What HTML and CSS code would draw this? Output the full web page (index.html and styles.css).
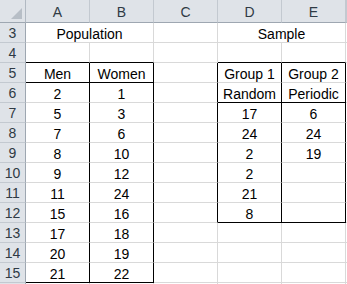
FILE: index.html
```html
<!DOCTYPE html>
<html>
<head>
<meta charset="utf-8">
<link rel="stylesheet" href="styles.css">
</head>
<body>
<div class="sheet">
  <div class="corner"><span class="tri"></span></div>
  <div class="ch">A</div><div class="ch">B</div><div class="ch">C</div><div class="ch">D</div><div class="ch">E</div><div class="ch last"></div>

  <div class="rh">3</div>
  <div class="c span2">Population</div><div class="c"></div><div class="c span2">Sample</div><div class="c f"></div>

  <div class="rh">4</div>
  <div class="c bb"></div><div class="c bb"></div><div class="c"></div><div class="c bb"></div><div class="c bb"></div><div class="c f"></div>

  <div class="rh">5</div>
  <div class="c bb br">Men</div><div class="c bb br">Women</div><div class="c br"></div><div class="c br">Group 1</div><div class="c br">Group 2</div><div class="c f"></div>

  <div class="rh">6</div>
  <div class="c br">2</div><div class="c br">1</div><div class="c br"></div><div class="c br bb">Random</div><div class="c br bb">Periodic</div><div class="c f"></div>

  <div class="rh">7</div>
  <div class="c br">5</div><div class="c br">3</div><div class="c br"></div><div class="c br">17</div><div class="c br">6</div><div class="c f"></div>

  <div class="rh">8</div>
  <div class="c br">7</div><div class="c br">6</div><div class="c br"></div><div class="c br">24</div><div class="c br">24</div><div class="c f"></div>

  <div class="rh">9</div>
  <div class="c br">8</div><div class="c br">10</div><div class="c br"></div><div class="c br">2</div><div class="c br">19</div><div class="c f"></div>

  <div class="rh">10</div>
  <div class="c br">9</div><div class="c br">12</div><div class="c br"></div><div class="c br">2</div><div class="c br"></div><div class="c f"></div>

  <div class="rh">11</div>
  <div class="c br">11</div><div class="c br">24</div><div class="c br"></div><div class="c br">21</div><div class="c br"></div><div class="c f"></div>

  <div class="rh">12</div>
  <div class="c br">15</div><div class="c br">16</div><div class="c br"></div><div class="c br bb">8</div><div class="c br bb"></div><div class="c f"></div>

  <div class="rh">13</div>
  <div class="c br">17</div><div class="c br">18</div><div class="c"></div><div class="c"></div><div class="c"></div><div class="c f"></div>

  <div class="rh">14</div>
  <div class="c br">20</div><div class="c br">19</div><div class="c"></div><div class="c"></div><div class="c"></div><div class="c f"></div>

  <div class="rh">15</div>
  <div class="c br bb">21</div><div class="c br bb">22</div><div class="c"></div><div class="c"></div><div class="c"></div><div class="c f"></div>

  <div class="rh"></div>
  <div class="c"></div><div class="c"></div><div class="c"></div><div class="c"></div><div class="c"></div><div class="c f"></div>
</div>
</body>
</html>
```
FILE: styles.css
```css
html, body {
  margin: 0;
  padding: 0;
  background: #ffffff;
}
.sheet {
  display: grid;
  grid-template-columns: 26px repeat(5, 64px) 1fr;
  grid-template-rows: 23px repeat(14, 20px);
  width: 347px;
  height: 284px;
  overflow: hidden;
  font-family: "Liberation Sans", Arial, sans-serif;
  font-size: 14px;
  color: #000;
}
.sheet > div {
  box-sizing: border-box;
  display: flex;
  align-items: center;
  justify-content: center;
  white-space: nowrap;
}
.corner {
  background: #dfe3e8;
  border-right: 1px solid #b1b9c2;
  border-bottom: 1px solid #9ea7b1;
  position: relative;
}
.tri {
  position: absolute;
  right: 3px;
  bottom: 3px;
  width: 0;
  height: 0;
  border-left: 11px solid transparent;
  border-bottom: 11px solid #b7bec6;
}
.ch {
  background: #dfe3e8;
  border-right: 1px solid #c3c9d0;
  border-bottom: 1px solid #9ea7b1;
  color: #2f3a44;
  padding-top: 1px;
}
.rh {
  background: #dfe3e8;
  border-right: 1px solid #9ea7b1;
  border-bottom: 1px solid #c3c9d0;
  color: #2f3a44;
  padding-top: 1px;
}
.c {
  border-right: 1px solid #d9d9d9;
  border-bottom: 1px solid #d9d9d9;
  padding-top: 2px;
}
.span2 {
  grid-column: span 2;
}
.f {
  border-right: none;
}
.sheet > .br {
  border-right-color: #000;
}
.sheet > .bb {
  border-bottom-color: #000;
}
```
